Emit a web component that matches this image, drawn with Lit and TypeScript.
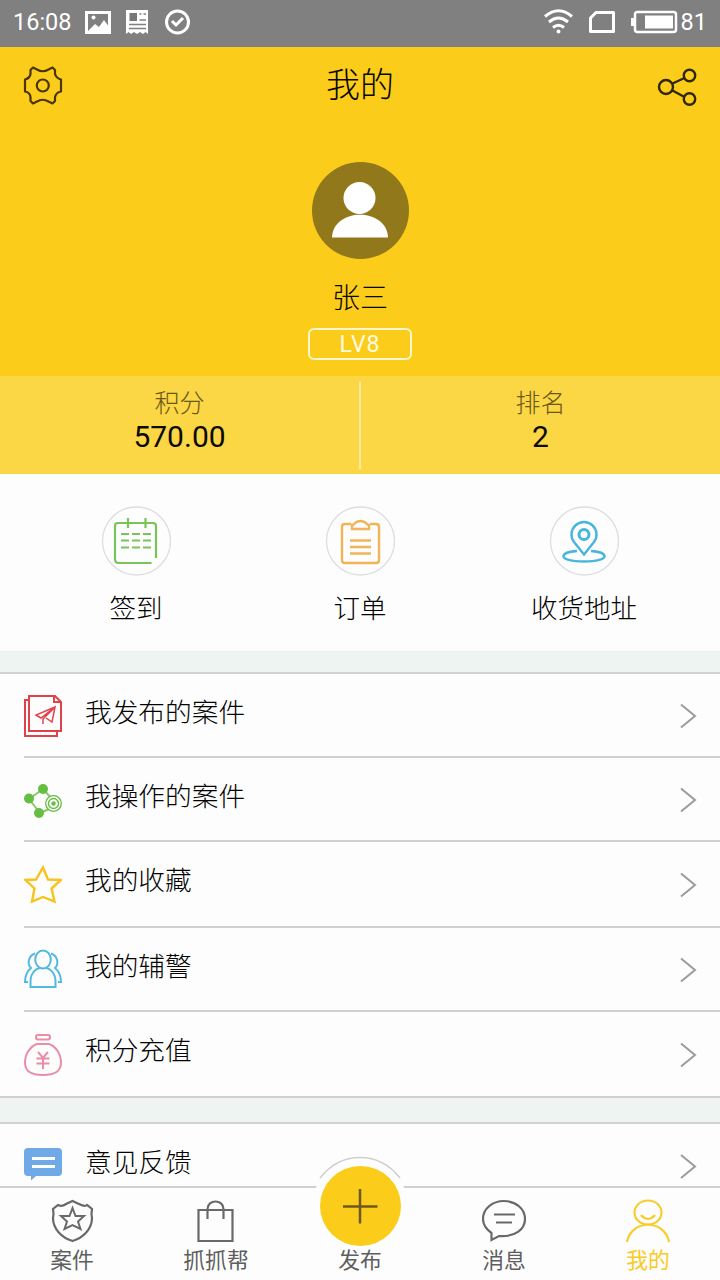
import { LitElement, html, css, svg } from "lit";
import { customElement } from "lit/decorators.js";

const rows = [
  {
    label: "我发布的案件", size: "r84", icon: svg`<g fill="none" stroke="#e0424b" stroke-width="2"><path d="M5 6H1V42H33V38"/><path d="M5 2H31L37 8V37H5Z"/><path d="M30 2V8H37"/><path stroke-width="1.5" d="M31 13L12 21L17 24L31 13L28 28L22 24M31 13L19 25V30"/></g>` },
  {
    label: "我操作的案件", size: "r84", icon: svg`<path d="M5 21L19 11L29 22M5 21L16 35L30 29" fill="none" stroke="#83cb66" stroke-width="2"/><g fill="#65bd42"><circle cx="19" cy="11" r="5"/><circle cx="5" cy="20.500" r="5"/><circle cx="15" cy="35" r="5"/></g><circle cx="29.500" cy="25.500" r="7.800" fill="#fff" stroke="#65bd42" stroke-width="1.3"/><circle cx="29.500" cy="25.500" r="5" fill="none" stroke="#65bd42" stroke-width="1.400"/><circle cx="29.500" cy="25.500" r="2.200" fill="#65bd42"/>` },
  {
    label: "我的收藏", size: "r86", icon: svg`<path d="M19 4.500L24 16.500L37 17L27.500 25.500L30.500 38.500L19 34L8 38.500L10.500 25.500L1.500 17L12 16.500Z" fill="none" stroke="#f8c31c" stroke-width="2.400"/>` },
  {
    label: "我的辅警", size: "r84", icon: svg`<g fill="none" stroke="#52b9df" stroke-width="2"><path d="M11 5.500C4 8 3 16 7 20C2 24 1 29 1 34H4M27 5.500C34 8 35 16 31 20C36 24 37 29 37 34H34"/><path d="M6.500 39V33C7 15 31 15 31.500 33V39Z" /><ellipse cx="19" cy="11.500" rx="7.800" ry="9" fill="#fdfdfd"/></g>` },
  {
    label: "积分充值", size: "r86", icon: svg`<g fill="none" stroke="#ea8da7" stroke-width="2"><rect x="12" y="2" width="14" height="4.500" rx="2"/><path d="M13 11H25C32 13.500 37 21 37 29.500C37 38 32 42 19 42C6 42 1 38 1 29.500C1 21 6 13.500 13 11Z"/><path d="M14 19L19 25L24 19M19 25V36M12.500 25.500H25.500M12.500 30.500H25.500"/></g>` }
];
const feedback = svg`<path d="M4 5H34Q38 5 38 9V29Q38 33 34 33H12L7 37.500V33H4Q0 33 0 29V9Q0 5 4 5Z" fill="#6faae7"/><path d="M8 15.500H31M8 23.500H31" stroke="#fff" stroke-width="3"/>`;

@customElement("app-root")
export class AppRoot extends LitElement {
  static styles = css`
    :host { display: flex; flex-direction: column; height: 1280px; width: 720px; overflow: hidden; background: #fdfdfd; color: #020202; font-family: Roboto, "Noto Sans CJK SC", sans-serif; font-weight: 300; }
    * { box-sizing: border-box; }
    svg { display: block; flex: none; }
    .status { height: 47px; flex: none; background: #808080; color: #fff; display: flex; align-items: center; padding: 0 14px 3px 13px; font-size: 23.5px; font-weight: 400; }
    .status .left { display: flex; align-items: center; flex: 1; }
    .status .left svg { margin-left: -1px; }
    .status .right { display: flex; align-items: center; margin-right: -1px; }
    .head { height: 329px; flex: none; background: #fbcc1a; color: #080600; display: flex; flex-direction: column; align-items: center; }
    .nav { width: 100%; height: 77px; padding: 0 22px; display: flex; justify-content: space-between; align-items: center; }
    .title { font-size: 34px; line-height: 40px; padding-bottom: 2px; }
    .avatar { margin-top: 37px; }
    .name { font-size: 28px; line-height: 36px; margin-top: 22px; }
    .level { width: 104px; height: 32px; margin-top: 11px; border: 2px solid #fff6cf; border-radius: 6px; color: #fffbe0; font-size: 23px; line-height: 29px; letter-spacing: 1px; text-align: center; font-weight: 400; }
    .stats { height: 98px; flex: none; background: #fbd645; display: flex; align-items: center; }
    .stat { flex: 1; text-align: center; height: 98px; padding-top: 12px; }
    .stat .k { font-size: 25px; line-height: 32px; color: #6a5818; }
    .stat .v { font-size: 30px; line-height: 34px; color: #0c0a03; font-weight: 400; }
    .bar { width: 2px; height: 87px; background: #fdeb9d; }
    .quick { height: 177px; flex: none; display: flex; padding: 32px 24px 0; }
    .q { flex: 1; display: flex; flex-direction: column; align-items: center; font-size: 26.5px; line-height: 36px; }
    .q .t { margin-top: 15px; }
    .gap { flex: none; background: #edf4f1; border-top: 1px solid #eee; border-bottom: 2px solid #d2d2d2; height: 23px; }
    .gap.second { height: 26px; border-top: 4px solid #f3f3f3; }
    .row { flex: none; margin-left: 24px; padding-right: 22px; display: flex; align-items: center; border-bottom: 2px solid #d0d0d0; }
    .row.last { margin-left: 0; padding-left: 24px; }
    .row .l { flex: 1; font-size: 26.7px; line-height: 36px; margin-left: 23px; padding-bottom: 4px; }
    .r84 { height: 84px; }
    .r86 { height: 86px; }
    .row.r86 .l { padding-bottom: 6px; }
    .row.cut { height: 62px; border: 0; padding-top: 18px; align-items: flex-start; }
    .row.cut .l { margin-top: 3px; }
    .tabs { flex: none; height: 94px; border-top: 2px solid #d0d0d0; background: #fdfdfd; display: flex; position: relative; }
    .tab { flex: 1; display: flex; flex-direction: column; align-items: center; font-size: 21.8px; line-height: 28px; padding-top: 11px; color: #5e5e5e; font-weight: 400; }
    .tab.on { color: #f9cb22; }
    .tab .t { margin-top: 4px; }
    .tab.mid { padding-top: 59px; }
    .fab { position: absolute; left: 310px; top: -34px; }
  `;

  render() {
    return html`
      <div class="status">
        <div class="left"><span>16:08</span>
          <svg width="120" height="30" viewBox="71 7 120 30">
            <path fill="#fff" fill-rule="evenodd" d="M85 11H111V34H85ZM88 14V31H108V14Z"/><path fill="#fff" d="M88 31L95 24L99 27L104 20L109 27V32H88Z"/><circle cx="93.500" cy="17.500" r="2" fill="#fff"/>
            <path fill="#fff" d="M126 10H148V34L145.500 32L143 34L140 32L137 34L134 32L131 34L128.500 32L126 34Z"/><path d="M139.500 14H141.500M143.500 14H146M139.500 20H146M129 24.500H146M129 28.500H146" stroke="#808080" stroke-width="1.500"/><path d="M129.500 13H137V21H129.500Z" fill="#777"/>
            <circle cx="177.500" cy="22" r="11" fill="none" stroke="#fff" stroke-width="3"/><path d="M172 21L176 25L183 18" fill="none" stroke="#fff" stroke-width="3"/>
          </svg>
        </div>
        <div class="right">
          <svg width="138" height="30" viewBox="543 7 138 30" fill="none" stroke="#fff" stroke-width="3">
            <path d="M545 16.500Q558.500 5 572 16.500M549 22Q558.500 14 568 22M553 27.500Q558.500 23 564 27.500"/><circle cx="558.500" cy="31.500" r="1" stroke-width="2"/>
            <path d="M596 12.500H613.500V31.500H590.500V18Z" stroke-linejoin="round"/>
            <rect x="635" y="12" width="41" height="20" rx="2.500" stroke-width="2.500"/><path d="M645 15.500H673V28.500H645Z" fill="#fff" stroke="none"/><path d="M632.500 18V26"/>
          </svg><span>81</span>
        </div>
      </div>
      <div class="head">
        <div class="nav">
          <svg width="42" height="42" viewBox="0 0 42 42" fill="none" stroke="#4a3506" stroke-width="2.200" stroke-linejoin="round"><path d="M11 2.500L15 4.500Q20.700 8 26.500 4.500L30.500 2.500L33 5V9Q34 13 39 14.500V26.500Q34 27.500 33 32V36L30.500 38.500L26.500 36.500Q20.700 33 15 36.500L11 38.500L8.500 36V32Q8 27.500 3 26.500V14.500Q8 13 8.500 9V5Z"/><circle cx="20.800" cy="20.500" r="6"/></svg>
          <div class="title">我的</div>
          <svg width="42" height="42" viewBox="0 0 42 42" fill="none" stroke="#302709" stroke-width="2.400"><circle cx="10" cy="22" r="7"/><circle cx="33.500" cy="10.500" r="5.700"/><circle cx="33.500" cy="34" r="5.700"/><path d="M16.500 18.500L28.500 13M16.500 25.500L28.500 32"/></svg>
        </div>
        <svg class="avatar" width="98" height="98" viewBox="0 0 98 98"><circle cx="49.500" cy="49.500" r="48.500" fill="#90781b"/><circle cx="48.500" cy="37" r="16" fill="#fff"/><path d="M21 76.500C22 46 76 46 77 76.500Z" fill="#fff"/></svg>
        <div class="name">张三</div>
        <div class="level">LV8</div>
      </div>
      <div class="stats">
        <div class="stat"><div class="k">积分</div><div class="v">570.00</div></div>
        <div class="bar"></div>
        <div class="stat"><div class="k">排名</div><div class="v">2</div></div>
      </div>
      <div class="quick">
        <div class="q"><svg width="70" height="70" viewBox="0 0 70 70" fill="none"><circle cx="35.500" cy="35" r="34" stroke="#dedee2" stroke-width="1.300"/><path d="M55 51V19Q55 16 52 16H17Q14 16 14 19V52Q14 56 18 56H50.500M27 11V21M44.500 11V21M20 27H28M31 27H39M42 27H50M20 33.500H28M31 33.500H39M42 33.500H50M20 40.500H28M31 40.500H39M42 40.500H50" stroke="#79c35b" stroke-width="2.200" transform="translate(0 1)"/></svg><div class="t">签到</div></div>
        <div class="q"><svg width="70" height="70" viewBox="0 0 70 70" fill="none"><circle cx="35.500" cy="35" r="34" stroke="#dedee2" stroke-width="1.300"/><g stroke="#efb558" stroke-width="2.400"><path d="M26 17H20Q17 17 17 20V53Q17 56 20 56H51Q54 56 54 53V20Q54 17 51 17H45M27 22V18Q29 18 30 16Q35.500 12 41 16Q42 18 44 18V22Z" transform="translate(0 1)"/><path d="M25 34.500H46M25 41H46M25 47.500H46"/></g></svg><div class="t">订单</div></div>
        <div class="q"><svg width="70" height="70" viewBox="0 0 70 70" fill="none"><circle cx="35.500" cy="35" r="34" stroke="#dedee2" stroke-width="1.300"/><g stroke="#48b5dc" stroke-width="2.400"><path d="M35 48.500L25 36A12.500 12.500 0 1 1 45 36Z"/><circle cx="35" cy="28.500" r="5" stroke-width="3"/><path d="M28 45C19 45.500 14.500 48 14.500 50.500C14.500 53 22 55.500 35 55.500C48 55.500 55.500 53 55.500 50.500C55.500 48 51 45.500 42 45"/></g></svg><div class="t">收货地址</div></div>
      </div>
      <div class="gap"></div>
      ${rows.map((r, i) => html`<div class="row ${r.size} ${i === rows.length - 1 ? "last" : ""}"><svg width="38" height="44" viewBox="0 -1 38 44">${r.icon}</svg><div class="l">${r.label}</div>${this.chevron()}</div>`)}
      <div class="gap second"></div>
      <div class="row cut"><svg width="38" height="42" viewBox="0 -1 38 42">${feedback}</svg><div class="l">意见反馈</div><svg width="18" height="44" viewBox="0 0 18 44"><path d="M1 13L15 24.500L1 36" fill="none" stroke="#9b9b9b" stroke-width="2"/></svg></div>
      <div class="tabs">
        <div class="tab"><svg width="44" height="44" viewBox="0 0 44 44" fill="none" stroke="#696969" stroke-width="2.200"><path d="M22.500 2L29 5Q35 8 37 6L42 10Q41 15 42 19C42 30 33 39 22.500 42C12 39 3 30 3 19Q4 15 3 10L8 6Q12 8 16 5Z"/><path stroke-width="2" d="M22.500 9L25.500 17H34L28 22.500L30.500 30L22.500 26L14.500 30L17 22.500L11 17H19.500Z"/></svg><div class="t">案件</div></div>
        <div class="tab"><svg width="44" height="44" viewBox="0 0 44 44" fill="none" stroke="#696969" stroke-width="2.200"><path d="M4.500 11H38.500V42H4.500ZM13.500 20V10C13.500 0 29.500 0 29.500 10V20"/></svg><div class="t">抓抓帮</div></div>
        <div class="tab mid"><div>发布</div></div>
        <div class="tab"><svg width="44" height="44" viewBox="0 0 44 44" fill="none" stroke="#696969" stroke-width="2.200"><path d="M9.500 41V34C4 30 1 26 1 20C1 10 10 2 22 2S43 10 43 20S34 38 17 37Z"/><path d="M12 15.500H33M14 23.500H30"/></svg><div class="t">消息</div></div>
        <div class="tab on"><svg width="44" height="44" viewBox="0 0 44 44" fill="none" stroke="#f8cc2c" stroke-width="2.200"><ellipse cx="22" cy="13.500" rx="13.500" ry="12"/><path d="M15 16Q22 24 29 16M1 43C5 20 39 20 43 43"/></svg><div class="t">我的</div></div>
        <svg class="fab" width="100" height="96" viewBox="0 0 100 96"><path d="M4 38Q18 3 50 3T96 38Z" fill="#fdfdfd"/><path d="M10 24Q26 3.500 50 3.500T90 24" fill="none" stroke="#cfcfcf" stroke-width="1.500"/><ellipse cx="50.500" cy="52" rx="40.500" ry="40" fill="#fbcc1a"/><path d="M33 52.500H67.500M50 35V69.500" stroke="#6c5922" stroke-width="2.500"/></svg>
      </div>`;
  }

  chevron() {
    return html`<svg width="18" height="30" viewBox="0 0 18 30"><path d="M1 4.500L15 16L1 27.500" fill="none" stroke="#9b9b9b" stroke-width="2"/></svg>`;
  }
}
